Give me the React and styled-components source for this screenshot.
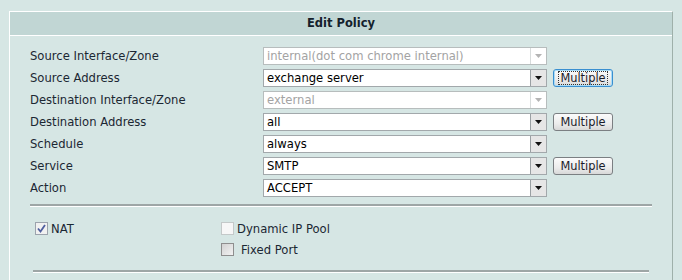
import React from "react";
import styled, { createGlobalStyle } from "styled-components";

const GlobalStyle = createGlobalStyle`
  html, body {
    margin: 0;
    padding: 0;
    background: #d6e6e4;
  }
  body {
    font-family: "DejaVu Sans", Verdana, sans-serif;
    font-size: 11.6px;
    color: #1b2733;
  }
`;

const Panel = styled.div`
  margin: 11px 0 0 9px;
  width: 662px;
  border-top: 1px solid #ffffff;
  border-left: 1px solid #ffffff;
  border-right: 1px solid #9fb0aa;
  min-height: 280px;
`;

const Header = styled.div`
  height: 23px;
  line-height: 23px;
  background: #c1d6d4;
  border-bottom: 1px solid #ffffff;
  text-align: center;
  font-weight: bold;
  font-size: 11.5px;
  color: #14212c;
`;

const Body = styled.div`
  padding: 11px 20px 0 20px;
`;

const FormGrid = styled.div`
  display: grid;
  grid-template-columns: 233px 284px auto;
  row-gap: 4px;
  align-items: center;
`;

const Label = styled.div`
  line-height: 18px;
  white-space: nowrap;
`;

const SelectBox = styled.div`
  display: flex;
  height: 18px;
  box-sizing: border-box;
  border: 1px solid ${(p) => (p.$disabled ? "#b7bdbd" : "#a2a8ab")};
  background: #ffffff;
`;

const SelectValue = styled.div`
  flex: 1;
  padding-left: 3px;
  line-height: 16px;
  color: ${(p) => (p.$disabled ? "#a3a3a3" : "#000000")};
  white-space: nowrap;
  overflow: hidden;
`;

const ArrowButton = styled.div`
  width: 16px;
  height: 16px;
  box-sizing: border-box;
  border-left: 1px solid ${(p) => (p.$disabled ? "#d8dcdc" : "#9aa0a3")};
  background: ${(p) => (p.$disabled ? "#ffffff" : "#e6e6e6")};
  display: flex;
  align-items: center;
  justify-content: center;
`;

const Cell = styled.div`
  display: flex;
  align-items: center;
`;

const MultipleButton = styled.button`
  margin-left: 6px;
  width: 60px;
  height: 18px;
  padding: 0;
  box-sizing: border-box;
  font-family: "DejaVu Sans", Verdana, sans-serif;
  font-size: 11.4px;
  color: #1b1b2a;
  border-radius: 3px;
  border: 1px solid ${(p) => (p.$focused ? "#3a8fd0" : "#7b7f82")};
  background: linear-gradient(#fbfbfb, #ececec 60%, #d8d8d8);
  box-shadow: ${(p) => (p.$focused ? "0 0 0 1px #a9dcf7 inset" : "none")};
  display: flex;
  align-items: center;
  justify-content: center;
`;

const FocusText = styled.span`
  outline: ${(p) => (p.$focused ? "1px dotted #333" : "none")};
  outline-offset: 0px;
  line-height: 12px;
  padding: 0 1px;
`;

const Separator = styled.div`
  margin: ${(p) => p.$margin};
  border-top: 2px solid #9ea6a6;
  border-bottom: 1px solid #ffffff;
`;

const Options = styled.div`
  display: grid;
  grid-template-columns: 186px auto;
  grid-auto-rows: 21px;
  padding-left: 5px;
  margin-top: 11px;
  align-items: center;
`;

const OptionItem = styled.label`
  display: flex;
  align-items: center;
  grid-column: ${(p) => p.$col};
  white-space: nowrap;
`;

const Box = styled.span`
  width: 13px;
  height: 13px;
  box-sizing: border-box;
  border: 1px solid ${(p) => p.$border};
  background: ${(p) => p.$bg};
  margin-right: ${(p) => p.$gap}px;
  display: flex;
  align-items: center;
  justify-content: center;
`;

const Arrow = ({ disabled }) => (
  <svg width="7" height="4" viewBox="0 0 7 4">
    <path d="M0 0H7L3.5 4Z" fill={disabled ? "#b4b4b4" : "#111111"} />
  </svg>
);

const Select = ({ value, disabled }) => (
  <SelectBox $disabled={disabled}>
    <SelectValue $disabled={disabled}>{value}</SelectValue>
    <ArrowButton $disabled={disabled}>
      <Arrow disabled={disabled} />
    </ArrowButton>
  </SelectBox>
);

const rows = [
  { label: "Source Interface/Zone", value: "internal(dot com chrome internal)", disabled: true },
  { label: "Source Address", value: "exchange server", multiple: true, focused: true },
  { label: "Destination Interface/Zone", value: "external", disabled: true },
  { label: "Destination Address", value: "all", multiple: true },
  { label: "Schedule", value: "always" },
  { label: "Service", value: "SMTP", multiple: true },
  { label: "Action", value: "ACCEPT" },
];

export default function App() {
  return (
    <>
      <GlobalStyle />
      <Panel>
        <Header>Edit Policy</Header>
        <Body>
          <FormGrid>
            {rows.map((r) => (
              <React.Fragment key={r.label}>
                <Label>{r.label}</Label>
                <Select value={r.value} disabled={r.disabled} />
                <Cell>
                  {r.multiple && (
                    <MultipleButton $focused={r.focused}>
                      <FocusText $focused={r.focused}>Multiple</FocusText>
                    </MultipleButton>
                  )}
                </Cell>
              </React.Fragment>
            ))}
          </FormGrid>
          <Separator $margin="7px 0 0 0" />
          <Options>
            <OptionItem $col="1">
              <Box $border="#9ca3ad" $bg="#f1f1f1" $gap={3}>
                <svg width="9" height="9" viewBox="0 0 9 9">
                  <path d="M1 4.5L3.5 7.5L8 1" fill="none" stroke="#4f5f9f" strokeWidth="1.8" />
                </svg>
              </Box>
              NAT
            </OptionItem>
            <OptionItem $col="2">
              <Box $border="#c4c9c9" $bg="#f7f7f7" $gap={3} />
              Dynamic IP Pool
            </OptionItem>
            <OptionItem $col="2">
              <Box $border="#8e8e8e" $bg="linear-gradient(135deg, #d2d2d2, #f2f2f2)" $gap={7} />
              Fixed Port
            </OptionItem>
          </Options>
          <Separator $margin="10px 3px 0 3px" />
        </Body>
      </Panel>
    </>
  );
}
